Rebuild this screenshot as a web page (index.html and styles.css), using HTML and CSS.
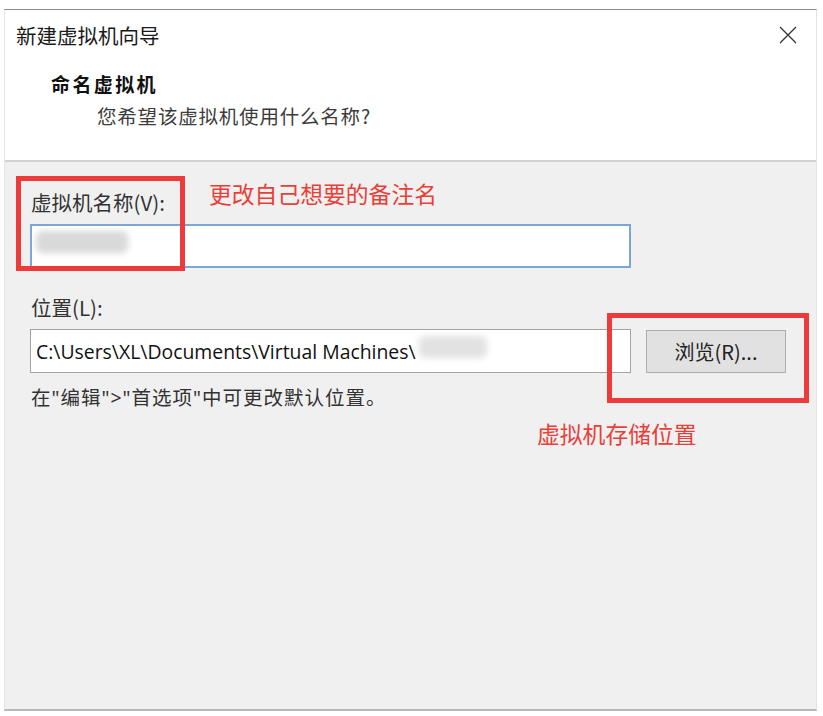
FILE: index.html
```html
<!DOCTYPE html>
<html lang="zh-CN">
<head>
    <meta charset="UTF-8">
    <meta name="viewport" content="width=device-width, initial-scale=1.0">
    <title>新建虚拟机向导</title>
    <link rel="stylesheet" href="styles.css">
</head>
<body>
    <div class="wizard">
        <div class="wizard-header">
            <div class="title-bar">
                <span class="title">新建虚拟机向导</span>
                <svg class="close" width="18" height="18" viewBox="0 0 18 18">
                    <path d="M1 1 L17 17 M17 1 L1 17" stroke="#333" stroke-width="1.3" fill="none"/>
                </svg>
            </div>
            <div class="step-title">命名虚拟机</div>
            <div class="step-desc">您希望该虚拟机使用什么名称?</div>
        </div>

        <div class="wizard-body">
            <div class="field">
                <label class="field-label">虚拟机名称(V):</label>
                <div class="text-box focused">
                    <span class="blurred name-blur"></span>
                </div>
            </div>

            <div class="field">
                <label class="field-label">位置(L):</label>
                <div class="field-row">
                    <div class="text-box">
                        <span class="path">C:\Users\XL\Documents\Virtual Machines\</span>
                        <span class="blurred path-blur"></span>
                    </div>
                    <button type="button" class="browse-btn">浏览(R)...</button>
                </div>
                <div class="hint">在"编辑"&gt;"首选项"中可更改默认位置。</div>
            </div>
        </div>

        <!-- red annotations drawn over the dialog -->
        <div class="mark mark-name"></div>
        <div class="mark mark-browse"></div>
        <div class="note note-name">更改自己想要的备注名</div>
        <div class="note note-browse">虚拟机存储位置</div>
    </div>
</body>
</html>
```

FILE: styles.css
```css
body {
    margin: 0;
    background-color: #ffffff;
    font-family: "Noto Sans CJK SC", "Noto Sans", sans-serif;
    color: #1a1a1a;
}
.wizard {
    position: relative;
    margin: 9px 0 0 4px;
    width: 813px;
    height: 702px;
    box-sizing: border-box;
    border-top: 1px solid #8c8c8c;
    border-left: 1px solid #e4e4e4;
    border-right: 1px solid #e4e4e4;
    border-bottom: 2px solid #b9b9b9;
    display: flex;
    flex-direction: column;
    background-color: #f0f0f0;
}
.wizard-header {
    background-color: #ffffff;
    height: 152px;
    box-sizing: border-box;
    border-bottom: 2px solid #d2d2d2;
    padding: 11px 0 0 11px;
}
.title-bar {
    display: flex;
    justify-content: space-between;
    align-items: center;
    padding-right: 19px;
}
.title {
    font-size: 20.5px;
    line-height: 28px;
    color: #1a1a1a;
}
.close {
    display: block;
}
.step-title {
    margin: 21px 0 0 35px;
    font-size: 19px;
    font-weight: bold;
    letter-spacing: 2.4px;
    line-height: 28px;
    color: #111;
}
.step-desc {
    margin: 4px 0 0 81px;
    font-size: 19.5px;
    line-height: 28px;
    color: #3c3c3c;
    letter-spacing: 0.8px;
}
.wizard-body {
    padding: 26px 0 0 25px;
}
.field-label {
    display: block;
    font-size: 20.5px;
    line-height: 28px;
    color: #333;
    padding-left: 1px;
}
.field {
    margin-bottom: 25px;
}
.text-box {
    position: relative;
    width: 601px;
    height: 44px;
    box-sizing: border-box;
    margin-top: 8px;
    background-color: #ffffff;
    border: 1px solid #a3a3a3;
    display: flex;
    align-items: center;
    padding-left: 5px;
}
.text-box.focused {
    border: 2px solid #7aa6d8;
}
.field-row {
    display: flex;
    align-items: center;
    gap: 15px;
}
.path {
    font-family: "Open Sans", "Noto Sans", sans-serif;
    font-size: 19.4px;
    color: #111;
    white-space: nowrap;
}
.blurred {
    position: absolute;
    background-color: #d9d9d9;
    filter: blur(3px);
    border-radius: 6px;
}
.name-blur {
    left: 4px;
    top: 5px;
    width: 92px;
    height: 22px;
}
.path-blur {
    left: 388px;
    top: 6px;
    width: 68px;
    height: 22px;
    background-color: #e2e2e2;
}
.browse-btn {
    width: 140px;
    height: 43px;
    margin-top: 8px;
    background-color: #e1e1e1;
    border: 1px solid #adadad;
    font-family: "Noto Sans CJK SC", sans-serif;
    font-size: 20px;
    color: #222;
    padding: 0;
}
.hint {
    margin-top: 12px;
    font-family: "Noto Sans", "Noto Sans CJK SC", sans-serif;
    font-size: 19.5px;
    letter-spacing: 1px;
    line-height: 26px;
    color: #333;
    padding-left: 1px;
}
.mark {
    position: absolute;
    border: 5px solid #ee3a3a;
    box-sizing: border-box;
}
.mark-name {
    left: 11px;
    top: 166px;
    width: 169px;
    height: 95px;
}
.mark-browse {
    left: 602px;
    top: 303px;
    width: 202px;
    height: 90px;
}
.note {
    position: absolute;
    font-size: 22.8px;
    line-height: 28px;
    color: #e84039;
    white-space: nowrap;
}
.note-name {
    left: 204px;
    top: 170px;
}
.note-browse {
    left: 532px;
    top: 410px;
}
```
